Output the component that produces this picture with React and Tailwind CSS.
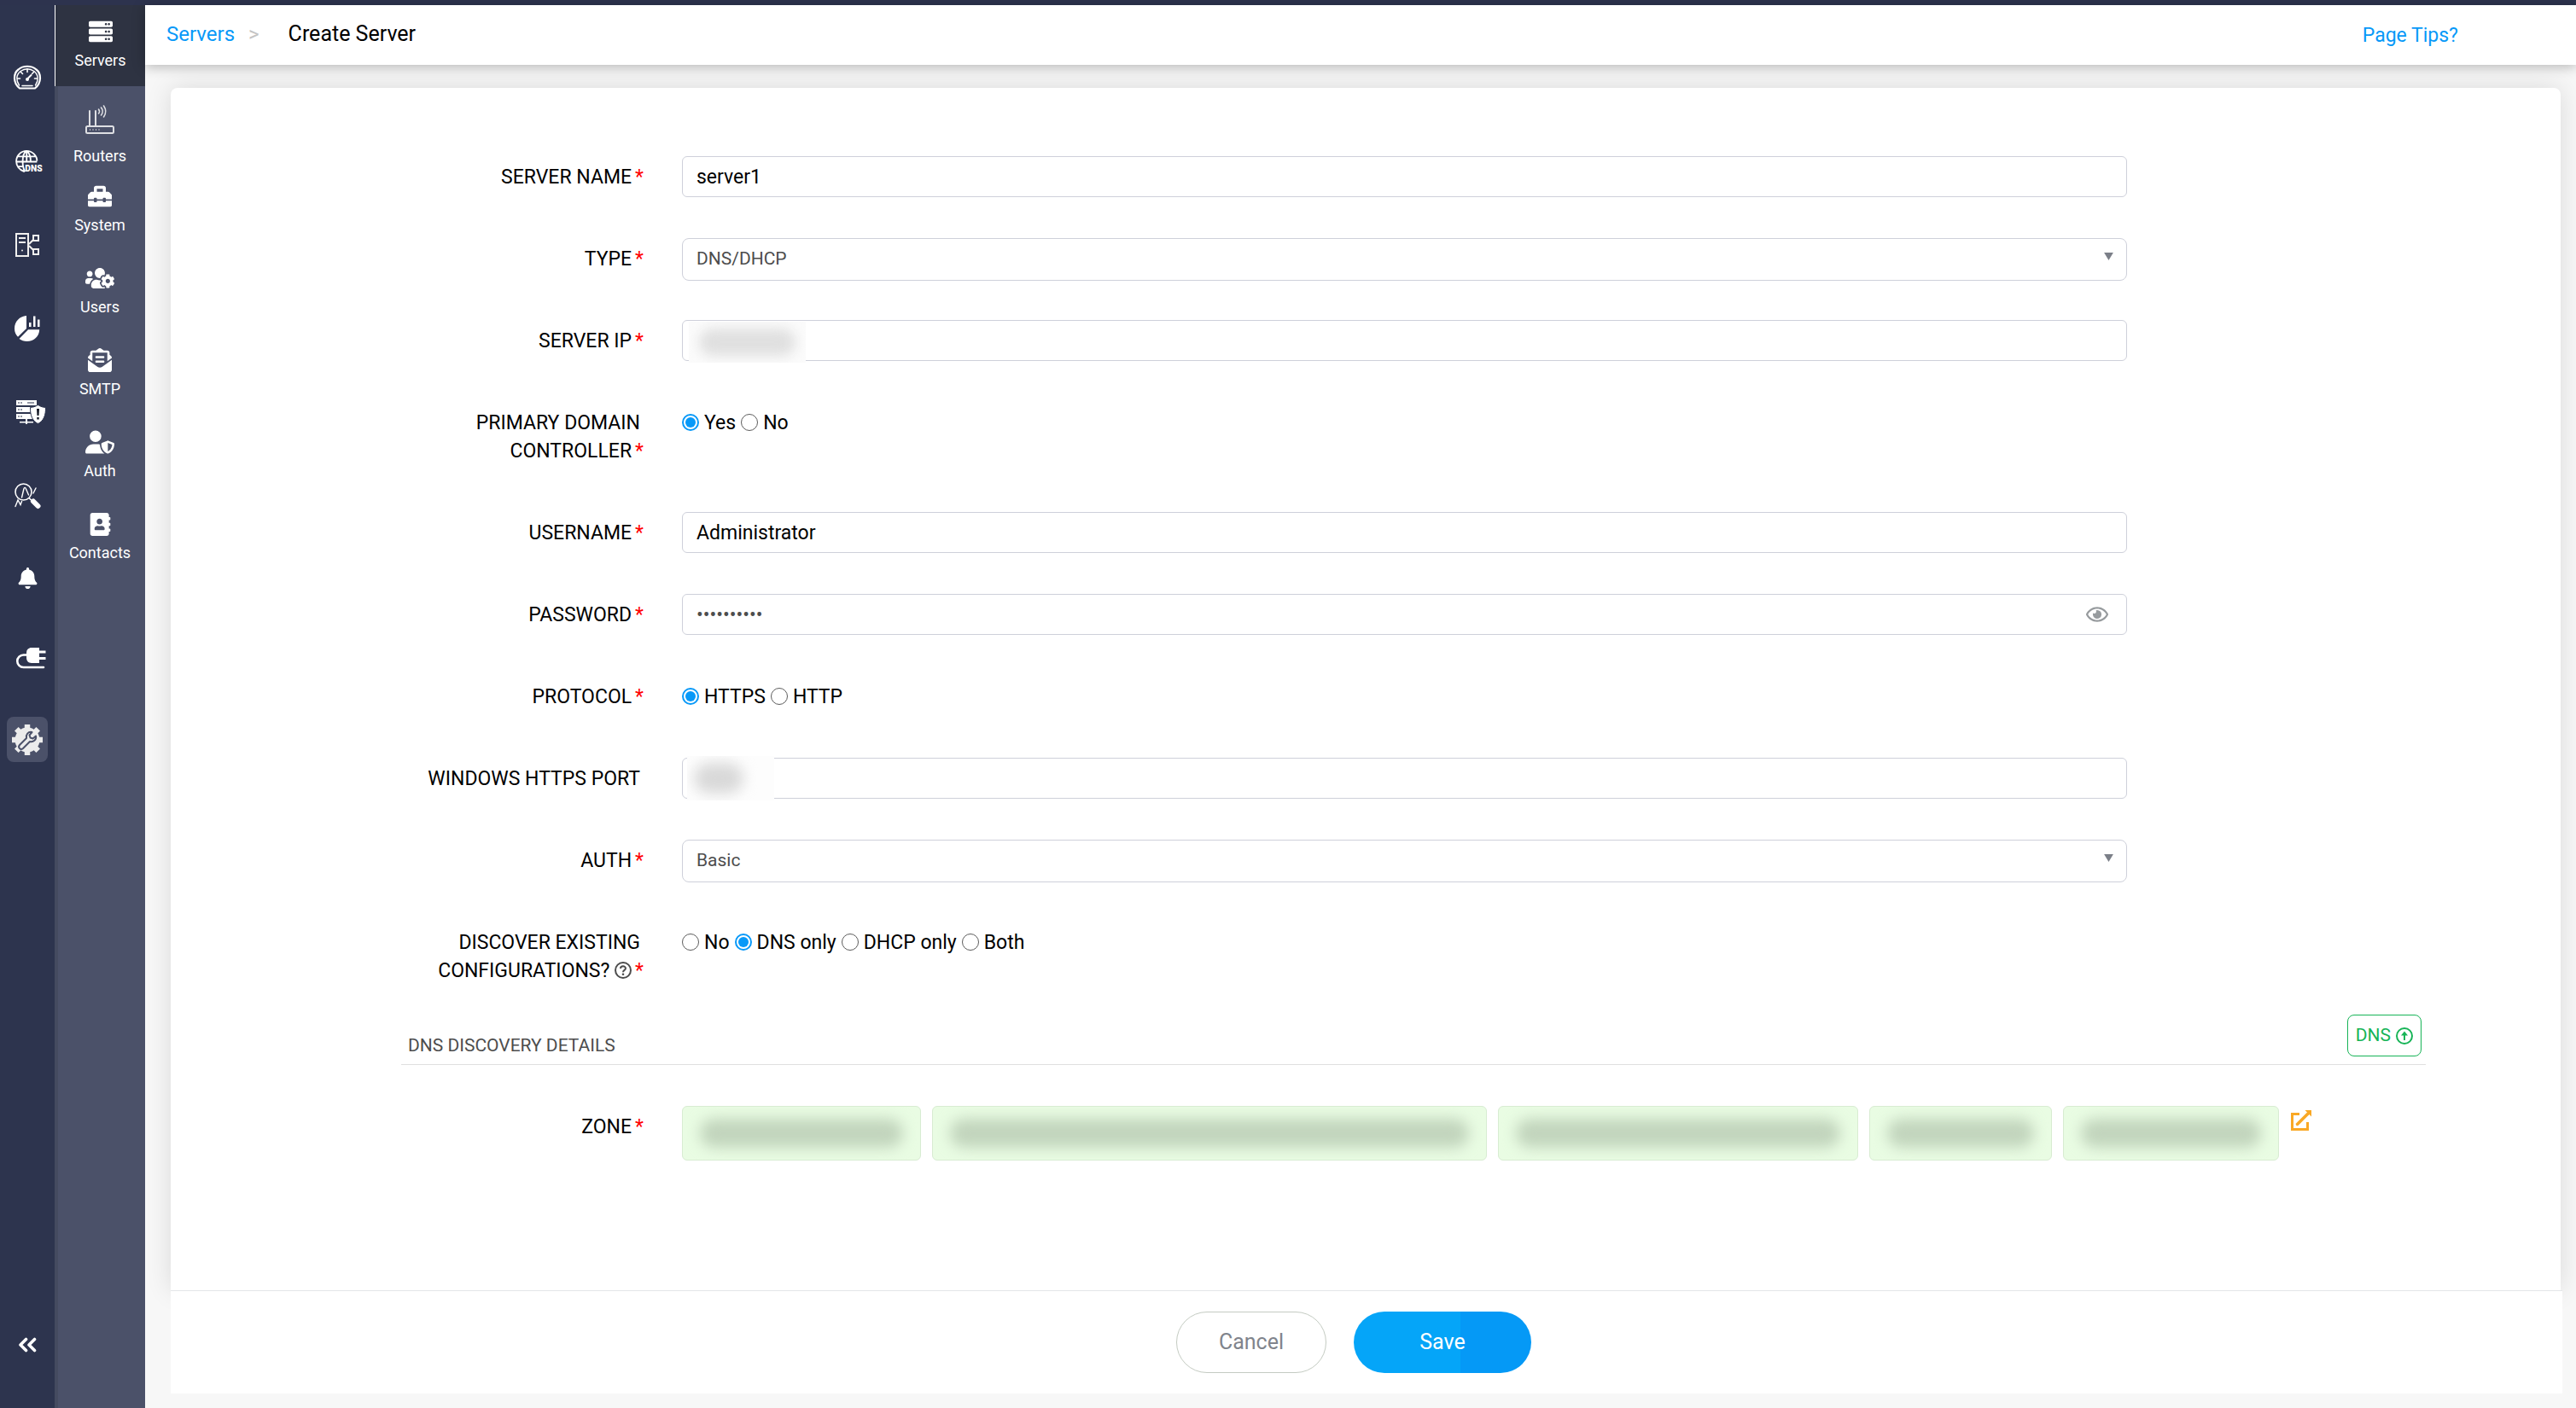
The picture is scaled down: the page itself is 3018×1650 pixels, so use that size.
import { FaServer, FaToolbox, FaUsersCog, FaEnvelopeOpenText, FaAddressBook, FaBell, FaRegEye } from "react-icons/fa";
import { FaUserShield } from "react-icons/fa6";

function GaugeIcon() {
  return (
    <svg width="34" height="30" viewBox="0 0 34 30" fill="none" stroke="white" strokeLinecap="round" aria-hidden="true">
      <path d="M8 27.5 C0 21 .5 10 6.500 5.500 C12 .5 22 .5 27.500 5.500 C33.500 10 34 21 26 27.500 Z" strokeWidth="2.200" strokeLinejoin="round" />
      <path d="M7.500 24 C3.500 18 4 11.500 9 7.500 C14 4 20 4 25 7.500 C30 11.500 30.500 18 26.500 24" strokeWidth="1.400" />
      <path d="M17 5v3.500M9.500 8.500l2 2M24.500 8.500l-2 2M5.500 16h3M28.500 16h-3M11 24.500h12" strokeWidth="1.600" />
      <path d="M17 16.500l4.500-4.500" strokeWidth="2" />
      <circle cx="17" cy="17" r="2" fill="white" stroke="none" />
    </svg>
  );
}

function DnsGlobeIcon() {
  return (
    <svg width="35" height="28" viewBox="0 0 37 30" fill="none" stroke="white" strokeWidth="2" aria-hidden="true">
      <path d="M12 28C5.500 26 2 20.500 2 15 C2 7.500 8 2 15 2 S28 8 28 14.500 M15 2C11.500 4 10 9 10 15c0 6 1 10 3 13 M15 2C19 5 20 9 20 15 M15 2v14 M4 9h22.500 M2 15.500h26 M3.500 21.500h7.500" />
      <text x="13" y="28" fill="white" stroke="none" fontSize="11" fontWeight="900" fontFamily="Roboto, sans-serif">DNS</text>
    </svg>
  );
}

function HostNodesIcon() {
  return (
    <svg width="30" height="30" viewBox="0 0 30 30" fill="none" stroke="#f0efee" strokeWidth="2" aria-hidden="true">
      <path d="M2 2h14v26H2zM5 7h8M5 12h8M17 14l5-5M17 16l5 5" />
      <path d="M22 4h6v6h-6zM22 20h6v6h-6z" />
      <circle cx="9" cy="21.500" r="1" fill="#f0efee" stroke="none" />
    </svg>
  );
}

function PieBarsIcon() {
  return (
    <svg width="32" height="32" viewBox="0 0 32 32" fill="white" aria-hidden="true">
      <path d="M15 1C7 1.500 1 8 1 16c0 4 1.500 7.500 4 9.800L15 16zM17 17.200L6.500 28C9 30 12 31 15.500 31 24 31 30 25 30.200 17.200z" />
      <path d="M18 9h2.500v5H18zM23 1.500h2.500V14H23zM28 5.500h2.500V14H28z" />
    </svg>
  );
}

function ServerAlertIcon() {
  return (
    <svg width="36" height="30" viewBox="0 0 36 30" fill="white" aria-hidden="true">
      <path d="M1 1h24v6H1zM1 9h24v6H1zM1 17h24v6H1zM12 23h2v3h7v1.500H14V29h-2v-1.500H5V26h7z" />
      <path d="M3 4h2M6 4h2M3 12h2M6 12h2M3 20h2M6 20h2M14 4h8" stroke="#2d344e" strokeWidth="1.200" />
      <path d="M26.500 6.500c3 2 6 2.800 9 3 .3 9-2.500 16-9 19-6.500-3-9.300-10-9-19 3-.2 6-1 9-3z" stroke="#2d344e" strokeWidth="1" />
      <path d="M25 11h3l-.5 8h-2zM25.300 21h2.400v2.500h-2.400z" fill="#111522" />
    </svg>
  );
}

function InspectIcon() {
  return (
    <svg width="32" height="32" viewBox="0 0 32 32" fill="none" stroke="white" strokeLinecap="round" aria-hidden="true">
      <circle cx="11.500" cy="11.500" r="9.500" strokeWidth="1.600" />
      <path d="M9.500 18L12 7.500Q13 5 14.500 8L17.500 15M2 28.500L5 21l3 5.500 1.500-4M23 13l3-6" strokeWidth="1.400" />
      <path d="M18.500 19l3 3" strokeWidth="1.600" />
      <path d="M23 22.500l5.500 5.500" strokeWidth="6" />
    </svg>
  );
}

function PlugIcon() {
  return (
    <svg width="36" height="26" viewBox="0 0 36 26" fill="white" aria-hidden="true">
      <path d="M19 1h9v18h-9c-4 0-6-3-6-6V7c0-3 2-6 6-6zM28 4.500h7.500v3H28zM28 12h7.500v3H28z" />
      <path d="M14 9.500H9.500a7 7 0 0 0 0 14.500H33" fill="none" stroke="white" strokeWidth="2.600" strokeLinecap="round" />
    </svg>
  );
}

function GearWrenchIcon() {
  return (
    <svg width="38" height="38" viewBox="0 0 38 38" aria-hidden="true">
      <circle cx="19" cy="19" r="14.500" fill="#ececec" />
      <path d="M19 1v36M1 19h36M6.300 6.300l25.400 25.400M31.700 6.300L6.300 31.700" stroke="#ececec" strokeWidth="6.500" />
      <path d="M10 25l8-8c-1-4 2-8 6.500-7l-3 3.500 1 3 3 1 3.500-3c1 4.500-3 7.500-7 6.500l-8 8c-3 2.500-6.500-1-4-4z" fill="#ececec" stroke="#4b5169" strokeWidth="2" strokeLinejoin="round" />
    </svg>
  );
}

function RouterIcon() {
  return (
    <svg width="36" height="36" viewBox="0 0 36 36" fill="none" stroke="#dedfe3" strokeWidth="2" strokeLinecap="round" aria-hidden="true">
      <rect x="2" y="26" width="32" height="8" rx="1.500" />
      <path d="M6 25V8M13 25V8" />
      <path d="M16.500 6q2 2.500 0 5M19.500 4q3.500 4.500 0 9M22.500 2q4.500 6.500 0 13" strokeWidth="1.600" />
      <path d="M6 30h14" strokeDasharray="1 2.500" strokeWidth="1.500" strokeLinecap="butt" />
    </svg>
  );
}

function EditIcon() {
  return (
    <svg width="26" height="26" viewBox="0 0 26 26" fill="none" stroke="#f9a825" strokeWidth="3" aria-hidden="true">
      <path d="M11 5.500H2.500v18h18V15" />
      <path d="M8.500 17.500L21 5" strokeWidth="3.500" strokeLinecap="round" />
      <path d="M17.500 1H25v7.500z" fill="#f9a825" stroke="none" />
    </svg>
  );
}

function ArrowUpCircleIcon() {
  return (
    <svg width="20" height="20" viewBox="0 0 20 20" fill="none" stroke="currentColor" strokeWidth="2" aria-hidden="true">
      <circle cx="10" cy="10" r="9" />
      <path d="M10 15V8" />
      <path d="M10 4.500l4 5H6z" fill="currentColor" stroke="none" />
    </svg>
  );
}

function HelpIcon() {
  return (
    <svg className="inline align-[-2px]" width="20" height="20" viewBox="0 0 20 20" fill="none" stroke="#4d4d4d" strokeWidth="2" aria-hidden="true">
      <circle cx="10" cy="10" r="9" />
      <path d="M7 8C7 4.500 13 4.500 13 7.800 13 10 10 9.800 10 12.200" />
      <circle cx="10" cy="14.800" r="1.300" fill="#4d4d4d" stroke="none" />
    </svg>
  );
}

function CollapseIcon() {
  return (
    <svg width="22" height="18" viewBox="0 0 22 18" fill="none" stroke="white" strokeWidth="3.600" strokeLinecap="round" strokeLinejoin="round" aria-hidden="true">
      <path d="M9.500 2.500L3 9l6.500 6.500M19.500 2.500L13 9l6.500 6.500" />
    </svg>
  );
}

const railItems = [
  { name: "Dashboard", icon: <GaugeIcon />, box: "h-[98px]" },
  { name: "DNS", icon: <DnsGlobeIcon />, box: "h-[98px] pl-1" },
  { name: "DHCP", icon: <HostNodesIcon />, box: "h-[98px]" },
  { name: "Reports", icon: <PieBarsIcon />, box: "h-[98px]" },
  { name: "Server alerts", icon: <ServerAlertIcon />, box: "h-[98px] pl-2" },
  { name: "Audit", icon: <InspectIcon />, box: "h-[98px]" },
  { name: "Notifications", icon: <FaBell size={25} />, box: "h-[94px]" },
  { name: "Connections", icon: <PlugIcon />, box: "h-[94px] pl-2" },
];

const sections = [
  { name: "System", icon: <FaToolbox size={28} /> },
  { name: "Users", icon: <FaUsersCog size={34} /> },
  { name: "SMTP", icon: <FaEnvelopeOpenText size={28} /> },
  { name: "Auth", icon: <FaUserShield size={34} /> },
  { name: "Contacts", icon: <FaAddressBook size={27} /> },
];

const zones = [
  { id: 1, width: "w-[280px]" },
  { id: 2, width: "w-[650px]" },
  { id: 3, width: "w-[422px]" },
  { id: 4, width: "w-[214px]" },
  { id: 5, width: "w-[253px]" },
];

const labelClass = "pt-2 pb-[7px] text-right text-[23px] leading-[33px] text-black";
const fieldClass = "block h-12 w-full rounded-md border border-[#ced0da] bg-white px-4 text-[23px] text-black outline-none";

function Star() {
  return <span className="-mr-1 ml-1 text-[#ff0000]">*</span>;
}

function Row({ label, htmlFor, required = true, children }) {
  return (
    <div className="grid grid-cols-[280px_minmax(0,1fr)] gap-x-[49px]">
      <label htmlFor={htmlFor} className={labelClass}>
        {label}
        {required && <Star />}
      </label>
      <div className="mr-[350px]">{children}</div>
    </div>
  );
}

function RadioRow({ label, name, options, value }) {
  return (
    <div role="radiogroup" aria-labelledby={name + "-label"} className="grid grid-cols-[280px_minmax(0,1fr)] gap-x-[49px]">
      <div id={name + "-label"} className={labelClass}>
        {label}
        <Star />
      </div>
      <div className="flex h-12 items-center gap-[6px] text-[23px] leading-[33px] text-black">
        {options.map((o) => (
          <label key={o} className="flex items-center gap-[6px]">
            <input
              type="radio"
              name={name}
              defaultChecked={o === value}
              className="size-5 appearance-none rounded-full border border-[#5c5c5c] bg-clip-content p-[2px] checked:border-2 checked:border-[#0899f8] checked:bg-[#0899f8]"
            />
            {o}
          </label>
        ))}
      </div>
    </div>
  );
}

function SelectField({ id, value }) {
  return (
    <div className="relative">
      <select id={id} defaultValue={value} className="block h-[50px] w-full appearance-none rounded-lg border border-[#ced0da] bg-white px-4 text-[21px] text-[#4d4d4d] outline-none">
        <option>{value}</option>
      </select>
      <svg className="pointer-events-none absolute top-[17px] right-4" width="11" height="9" viewBox="0 0 12 10" fill="#7b7f88" aria-hidden="true">
        <path d="M0 0h12L6 10z" />
      </svg>
    </div>
  );
}

export default function App() {
  return (
    <div className="flex min-h-screen flex-col bg-[#f7f7f7] font-[Roboto,sans-serif]">
      <div className="h-[6px] bg-[#2d334e]" />
      <div className="flex flex-1">
        <nav aria-label="Main" className="flex w-16 shrink-0 flex-col items-center bg-[#2d344e] pt-9 pb-[65px] text-white">
          {railItems.map((item) => (
            <button key={item.name} type="button" aria-label={item.name} className={"flex w-full items-center justify-center " + item.box}>
              {item.icon}
            </button>
          ))}
          <button type="button" aria-label="Settings" className="mt-[22px] flex h-[53px] w-12 items-center justify-center rounded-lg bg-[#4b5169]">
            <GearWrenchIcon />
          </button>
          <button type="button" aria-label="Collapse menu" className="mt-auto">
            <CollapseIcon />
          </button>
        </nav>

        <nav aria-label="Settings" className="flex w-[106px] shrink-0 flex-col border-l-4 border-[#454b60] bg-[#4b5169] text-lg leading-6 text-white">
          <a href="#servers" className="-ml-1 flex h-[95px] flex-col items-center border-l border-white bg-[#2e3342] pt-[17px]">
            <FaServer size={28} />
            <span className="mt-2">Servers</span>
          </a>
          <a href="#routers" className="-ml-1 flex h-24 flex-col items-center pt-[21px]">
            <RouterIcon />
            <span className="mt-[13px]">Routers</span>
          </a>
          {sections.map((s) => (
            <a key={s.name} href={"#" + s.name} className="-ml-1 flex h-24 flex-col items-center pt-[15px]">
              <span className="flex h-9 items-center">{s.icon}</span>
              <span className="mt-1">{s.name}</span>
            </a>
          ))}
        </nav>

        <div className="flex min-w-0 flex-1 flex-col">
          <header className="relative z-10 flex h-[70px] items-center justify-between bg-white pr-[138px] pb-[2px] pl-[25px] text-2xl shadow-[0_2px_14px_rgba(0,0,0,0.28)]">
            <div className="flex items-center">
              <a href="#servers" className="text-[#0899f8]">Servers</a>
              <span className="ml-4 text-[#c4c4c4]">&gt;</span>
              <h1 className="ml-[34px] text-[25px] text-black">Create Server</h1>
            </div>
            <a href="#tips" className="pt-1 text-[23px] text-[#0899f8]">Page Tips?</a>
          </header>

          <form className="flex flex-1 flex-col pt-[27px] pr-[18px] pb-[17px] pl-[30px]" onSubmit={(e) => e.preventDefault()}>
            <section className="flex flex-1 flex-col rounded-t-lg bg-white pt-20 pr-[158px] pl-[270px] shadow-[0_0_30px_rgba(0,0,0,0.12)]">
              <div className="flex flex-col gap-12">
                <Row label="SERVER NAME" htmlFor="name">
                  <input id="name" className={fieldClass} defaultValue="server1" />
                </Row>
                <Row label="TYPE" htmlFor="type">
                  <div className="h-12"><SelectField id="type" value="DNS/DHCP" /></div>
                </Row>
                <Row label="SERVER IP" htmlFor="ip">
                  <div className="relative">
                    <input id="ip" className={fieldClass} />
                    <div className="absolute top-[2px] left-2 h-12 w-[137px] overflow-hidden bg-[#fbfbfb] px-3 py-2">
                      <div className="h-full rounded-full bg-[#e0e0e0] blur-[7px]" />
                    </div>
                  </div>
                </Row>
                <RadioRow label="PRIMARY DOMAIN CONTROLLER" name="primary" options={["Yes", "No"]} value="Yes" />
                <Row label="USERNAME" htmlFor="user">
                  <input id="user" className={fieldClass} defaultValue="Administrator" />
                </Row>
                <Row label="PASSWORD" htmlFor="password">
                  <div className="relative">
                    <input id="password" type="password" className="block h-12 w-full rounded-md border border-[#ced0da] bg-white px-4 text-[23px] text-[#4d4d4d] outline-none" defaultValue="abcdefghij" />
                    <button type="button" aria-label="Show password" className="absolute inset-y-0 right-[22px] text-[#979b9e]">
                      <FaRegEye size={26} />
                    </button>
                  </div>
                </Row>
                <RadioRow label="PROTOCOL" name="protocol" options={["HTTPS", "HTTP"]} value="HTTPS" />
                <Row label="WINDOWS HTTPS PORT" htmlFor="port" required={false}>
                  <div className="relative">
                    <input id="port" className={fieldClass} />
                    <div className="absolute -top-[2px] left-[6px] h-[52px] w-[102px] overflow-hidden bg-[#fdfdfd] py-2 pl-2">
                      <div className="h-full w-[58px] rounded-full bg-[#d9d9d9] blur-[8px]" />
                    </div>
                  </div>
                </Row>
                <Row label="AUTH" htmlFor="auth">
                  <div className="h-12"><SelectField id="auth" value="Basic" /></div>
                </Row>
                <RadioRow
                  label={<>DISCOVER EXISTING CONFIGURATIONS? <HelpIcon /></>}
                  name="discover"
                  options={["No", "DNS only", "DHCP only", "Both"]}
                  value="DNS only"
                />
              </div>

              <div className="mt-7 flex h-[59px] items-start justify-between border-b border-[#e0e0e0] pr-[5px] pl-2">
                <h2 className="pt-5 text-[21px] leading-[33px] text-[#4d4d4d]">DNS DISCOVERY DETAILS</h2>
                <button type="button" className="flex h-[49px] items-center gap-[6px] rounded-lg border border-[#17b457] px-[9px] text-[21px] text-[#17b457]">
                  DNS <ArrowUpCircleIcon />
                </button>
              </div>

              <div className="mt-12 mb-[152px] grid grid-cols-[280px_minmax(0,1fr)] gap-x-[49px]">
                <div className={labelClass}>ZONE<Star /></div>
                <div className="flex flex-wrap items-start gap-[13px]">
                  {zones.map((z) => (
                    <div key={z.id} className={"h-16 overflow-hidden rounded-md border border-[#d8ecd2] bg-[#e9fce3] px-5 py-[14px] " + z.width}>
                      <div className="h-full rounded-full bg-[#c2d5bd] blur-[8px]" />
                    </div>
                  ))}
                  <button type="button" aria-label="Edit zones" className="pt-1"><EditIcon /></button>
                </div>
              </div>
            </section>

            <footer className="relative -mr-[2px] flex h-[121px] items-center justify-center gap-8 border-t border-[#e4e6e8] bg-white pr-[30px]">
              <button type="button" className="h-[72px] w-44 rounded-full border border-[#c4cbc2] text-[25px] text-[#80848c]">Cancel</button>
              <button type="submit" className="h-[72px] w-[208px] rounded-full bg-linear-to-r from-[#05a5f8] from-60% to-[#0599f6] to-60% text-[25px] text-white">Save</button>
            </footer>
          </form>
        </div>
      </div>
    </div>
  );
}
